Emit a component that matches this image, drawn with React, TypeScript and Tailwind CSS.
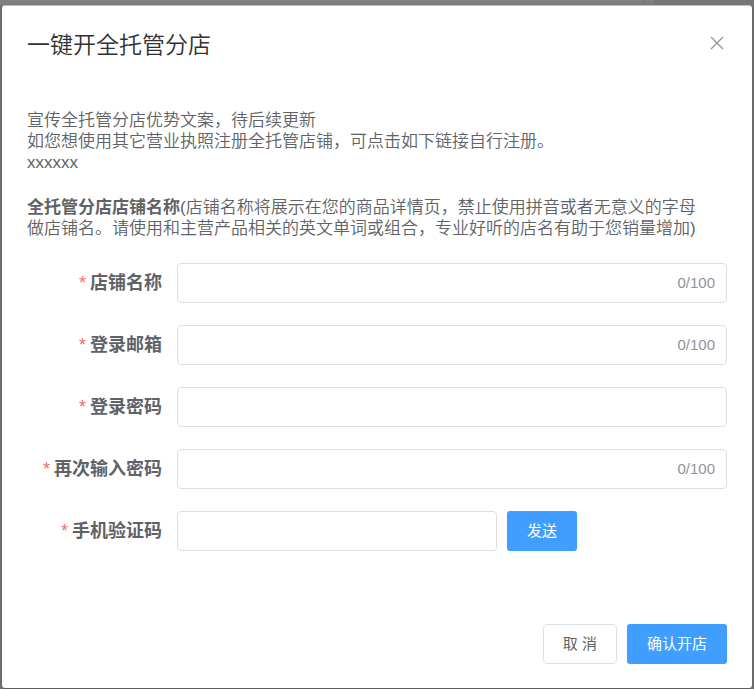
import React from 'react';

const fields = [
  { id: 'shopName', label: '店铺名称', type: 'text', limit: 100 },
  { id: 'email', label: '登录邮箱', type: 'email', limit: 100 },
  { id: 'password', label: '登录密码', type: 'password' },
  { id: 'confirmPassword', label: '再次输入密码', type: 'password', limit: 100 },
];

const inputClass =
  'block h-10 w-full rounded border border-[#dcdfe6] bg-white px-[15px] text-[15px] text-[#606266] outline-none focus:border-[#409eff]';

function FieldLabel({ htmlFor, children }: { htmlFor: string; children: React.ReactNode }) {
  return (
    <label
      htmlFor={htmlFor}
      className="flex h-10 w-[150px] shrink-0 items-center justify-end gap-1 pr-[15px] text-[18px] leading-6 font-bold"
    >
      <span className="font-normal text-[#f56c6c]">*</span>
      {children}
    </label>
  );
}

function CloseIcon() {
  return (
    <svg viewBox="0 0 20 20" className="h-5 w-5" fill="none" stroke="currentColor" strokeWidth="1.3" aria-hidden="true">
      <path d="M4 4 16 16M16 4 4 16" />
    </svg>
  );
}

export default function App() {
  const [values, setValues] = React.useState<Record<string, string>>({});

  return (
    <div className="min-h-screen bg-[#747474] pb-px font-['Liberation_Sans','Noto_Sans_CJK_SC',sans-serif] text-[#606266]">
      {/* page columns behind the overlay */}
      <div className="flex h-[5px] bg-[#7f7f7f]">
        <div className="w-[177px] border-r border-[#777985]" />
        <div className="flex-1 border-r-2 border-[#777785]" />
        <div className="w-[9px]" />
        <div className="w-[100px] bg-[#75777a]" />
      </div>

      <div
        role="dialog"
        aria-labelledby="dialog-title"
        className="mx-0.5 rounded-[3px] border-t border-[#bfbfbf] bg-white px-[25px] pb-6 shadow-[0_1px_3px_rgba(0,0,0,0.3)]"
      >
        <header className="flex items-start justify-between pt-6">
          <h2 id="dialog-title" className="text-[23px] leading-[30px] font-[350] text-[#303133]">
            一键开全托管分店
          </h2>
          <button type="button" aria-label="关闭" className="mt-[3px] text-[#909399]">
            <CloseIcon />
          </button>
        </header>

        <div className="mt-[50px] text-[17px] leading-[21px] font-[350]">
          <p>宣传全托管分店优势文案，待后续更新</p>
          <p>如您想使用其它营业执照注册全托管店铺，可点击如下链接自行注册。</p>
          <p>xxxxxx</p>
          <p className="mt-6">
            <b className="font-bold">全托管分店店铺名称</b>(店铺名称将展示在您的商品详情页，禁止使用拼音或者无意义的字母
            <br />
            做店铺名。请使用和主营产品相关的英文单词或组合，专业好听的店名有助于您销量增加)
          </p>
        </div>

        <form className="mt-6" onSubmit={(e) => e.preventDefault()}>
          {fields.map((field) => (
            <div key={field.id} className="mb-[22px] flex">
              <FieldLabel htmlFor={field.id}>{field.label}</FieldLabel>
              <div className="relative flex-1">
                <input
                  id={field.id}
                  type={field.type}
                  maxLength={field.limit}
                  value={values[field.id] ?? ''}
                  onChange={(e) => setValues({ ...values, [field.id]: e.target.value })}
                  className={inputClass}
                />
                {field.limit && (
                  <span className="pointer-events-none absolute inset-y-0 right-3 flex items-center text-[15px] text-[#909399]">
                    {(values[field.id] ?? '').length}/{field.limit}
                  </span>
                )}
              </div>
            </div>
          ))}

          <div className="flex">
            <FieldLabel htmlFor="smsCode">手机验证码</FieldLabel>
            <div className="flex flex-1 gap-2.5">
              <div className="w-80">
                <input id="smsCode" type="text" className={inputClass} />
              </div>
              <button type="button" className="h-10 rounded-[3px] bg-[#409eff] px-5 text-[15px] text-white">
                发送
              </button>
            </div>
          </div>

          <footer className="mt-[73px] flex justify-end gap-2.5 text-[15px]">
            <button type="button" className="h-10 rounded border border-[#dcdfe6] bg-white px-[19px]">
              取 消
            </button>
            <button type="submit" className="h-10 rounded-[3px] bg-[#409eff] px-5 text-white">
              确认开店
            </button>
          </footer>
        </form>
      </div>
    </div>
  );
}
